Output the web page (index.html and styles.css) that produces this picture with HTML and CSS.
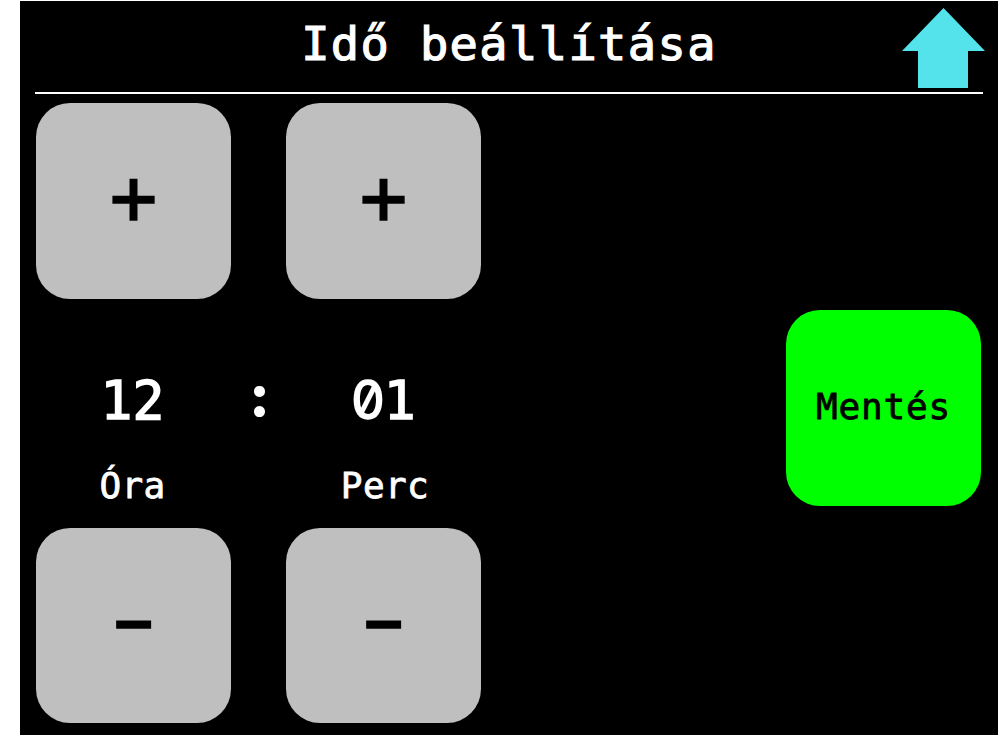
FILE: index.html
```html
<!DOCTYPE html>
<html lang="hu">
<head>
<meta charset="utf-8">
<title>Idő beállítása</title>
<link rel="stylesheet" href="styles.css">
</head>
<body>
<main class="screen">
  <header class="header">
    <h1 class="title">Idő beállítása</h1>
    <svg class="up" viewBox="0 0 83 80" aria-hidden="true"><path d="M41.5 0 83 43H66V80H16V43H0Z"/></svg>
  </header>
  <div class="content">
    <section class="column">
      <button class="key plus"><span>+</span></button>
      <div class="reading">
        <div class="value hours">12</div>
        <div class="label">Óra</div>
      </div>
      <button class="key minus"><span>−</span></button>
    </section>
    <div class="colon">:</div>
    <section class="column">
      <button class="key plus"><span>+</span></button>
      <div class="reading">
        <div class="value minutes"><span class="zero">0</span>1</div>
        <div class="label perc">Perc</div>
      </div>
      <button class="key minus"><span>−</span></button>
    </section>
    <button class="key save">Mentés</button>
  </div>
</main>
</body>
</html>
```
FILE: styles.css
```css
* { box-sizing: border-box; }
body {
  margin: 0;
  padding: 1px 0 0 20px;
  height: 735px;
  overflow: hidden;
  background: #fff;
  font-family: "DejaVu Sans Mono", monospace;
}
.screen {
  height: 734px;
  padding: 0 15px;
  background: #000;
  color: #fff;
}
.header {
  position: relative;
  height: 93px;
  border-bottom: 2px solid #fff;
}
.title {
  margin: 0;
  font-size: 47px;
  font-weight: 400;
  line-height: 86px;
  letter-spacing: 1.4px;
  text-align: center;
  -webkit-text-stroke: 1.2px currentColor;
}
.up {
  position: absolute;
  top: 7px;
  right: -2px;
  width: 83px;
  height: 80px;
  fill: #54e3ea;
}
.content {
  display: flex;
  height: 620px;
  margin: 9px 2px 0 1px;
}
.column {
  display: flex;
  flex-direction: column;
  width: 195px;
}
.key {
  display: flex;
  align-items: center;
  justify-content: center;
  flex: none;
  width: 195px;
  height: 195.5px;
  padding: 0;
  border: 0;
  border-radius: 34px;
  background: #bfbfbf;
  color: #000;
  font-family: inherit;
}
.plus {
  padding-bottom: 7px;
  font-size: 79px;
  line-height: 81px;
  -webkit-text-stroke: 1.5px currentColor;
}
.minus {
  padding-bottom: 6px;
  font-size: 62px;
  line-height: 63px;
  -webkit-text-stroke: 3px currentColor;
}
.reading {
  flex: 1;
  padding-top: 60px;
  text-align: center;
}
.value {
  height: 85px;
  font-size: 53px;
  line-height: 84px;
  -webkit-text-stroke: 1.5px currentColor;
}
.hours {
  padding-right: 2px;
}
.minutes {
  height: 86px;
  margin-top: -1px;
}
.zero {
  display: inline-block;
  width: 32.5px;
  font-family: Inter, sans-serif;
  font-feature-settings: "zero";
}
.label {
  padding-right: 2px;
  font-size: 36px;
  line-height: 84px;
  letter-spacing: 0.4px;
  -webkit-text-stroke: 0.8px currentColor;
}
.perc {
  padding: 0 0 0 3px;
}
.colon {
  width: 55px;
  padding: 250px 0 0 2px;
  font-family: Lato, sans-serif;
  font-size: 54px;
  line-height: 84px;
  text-align: center;
  -webkit-text-stroke: 4.2px currentColor;
}
.save {
  align-self: flex-start;
  margin: 207px 0 0 auto;
  padding-bottom: 2px;
  background: #0f0;
  font-size: 36px;
  letter-spacing: 0.8px;
  -webkit-text-stroke: 0.8px currentColor;
}
```
